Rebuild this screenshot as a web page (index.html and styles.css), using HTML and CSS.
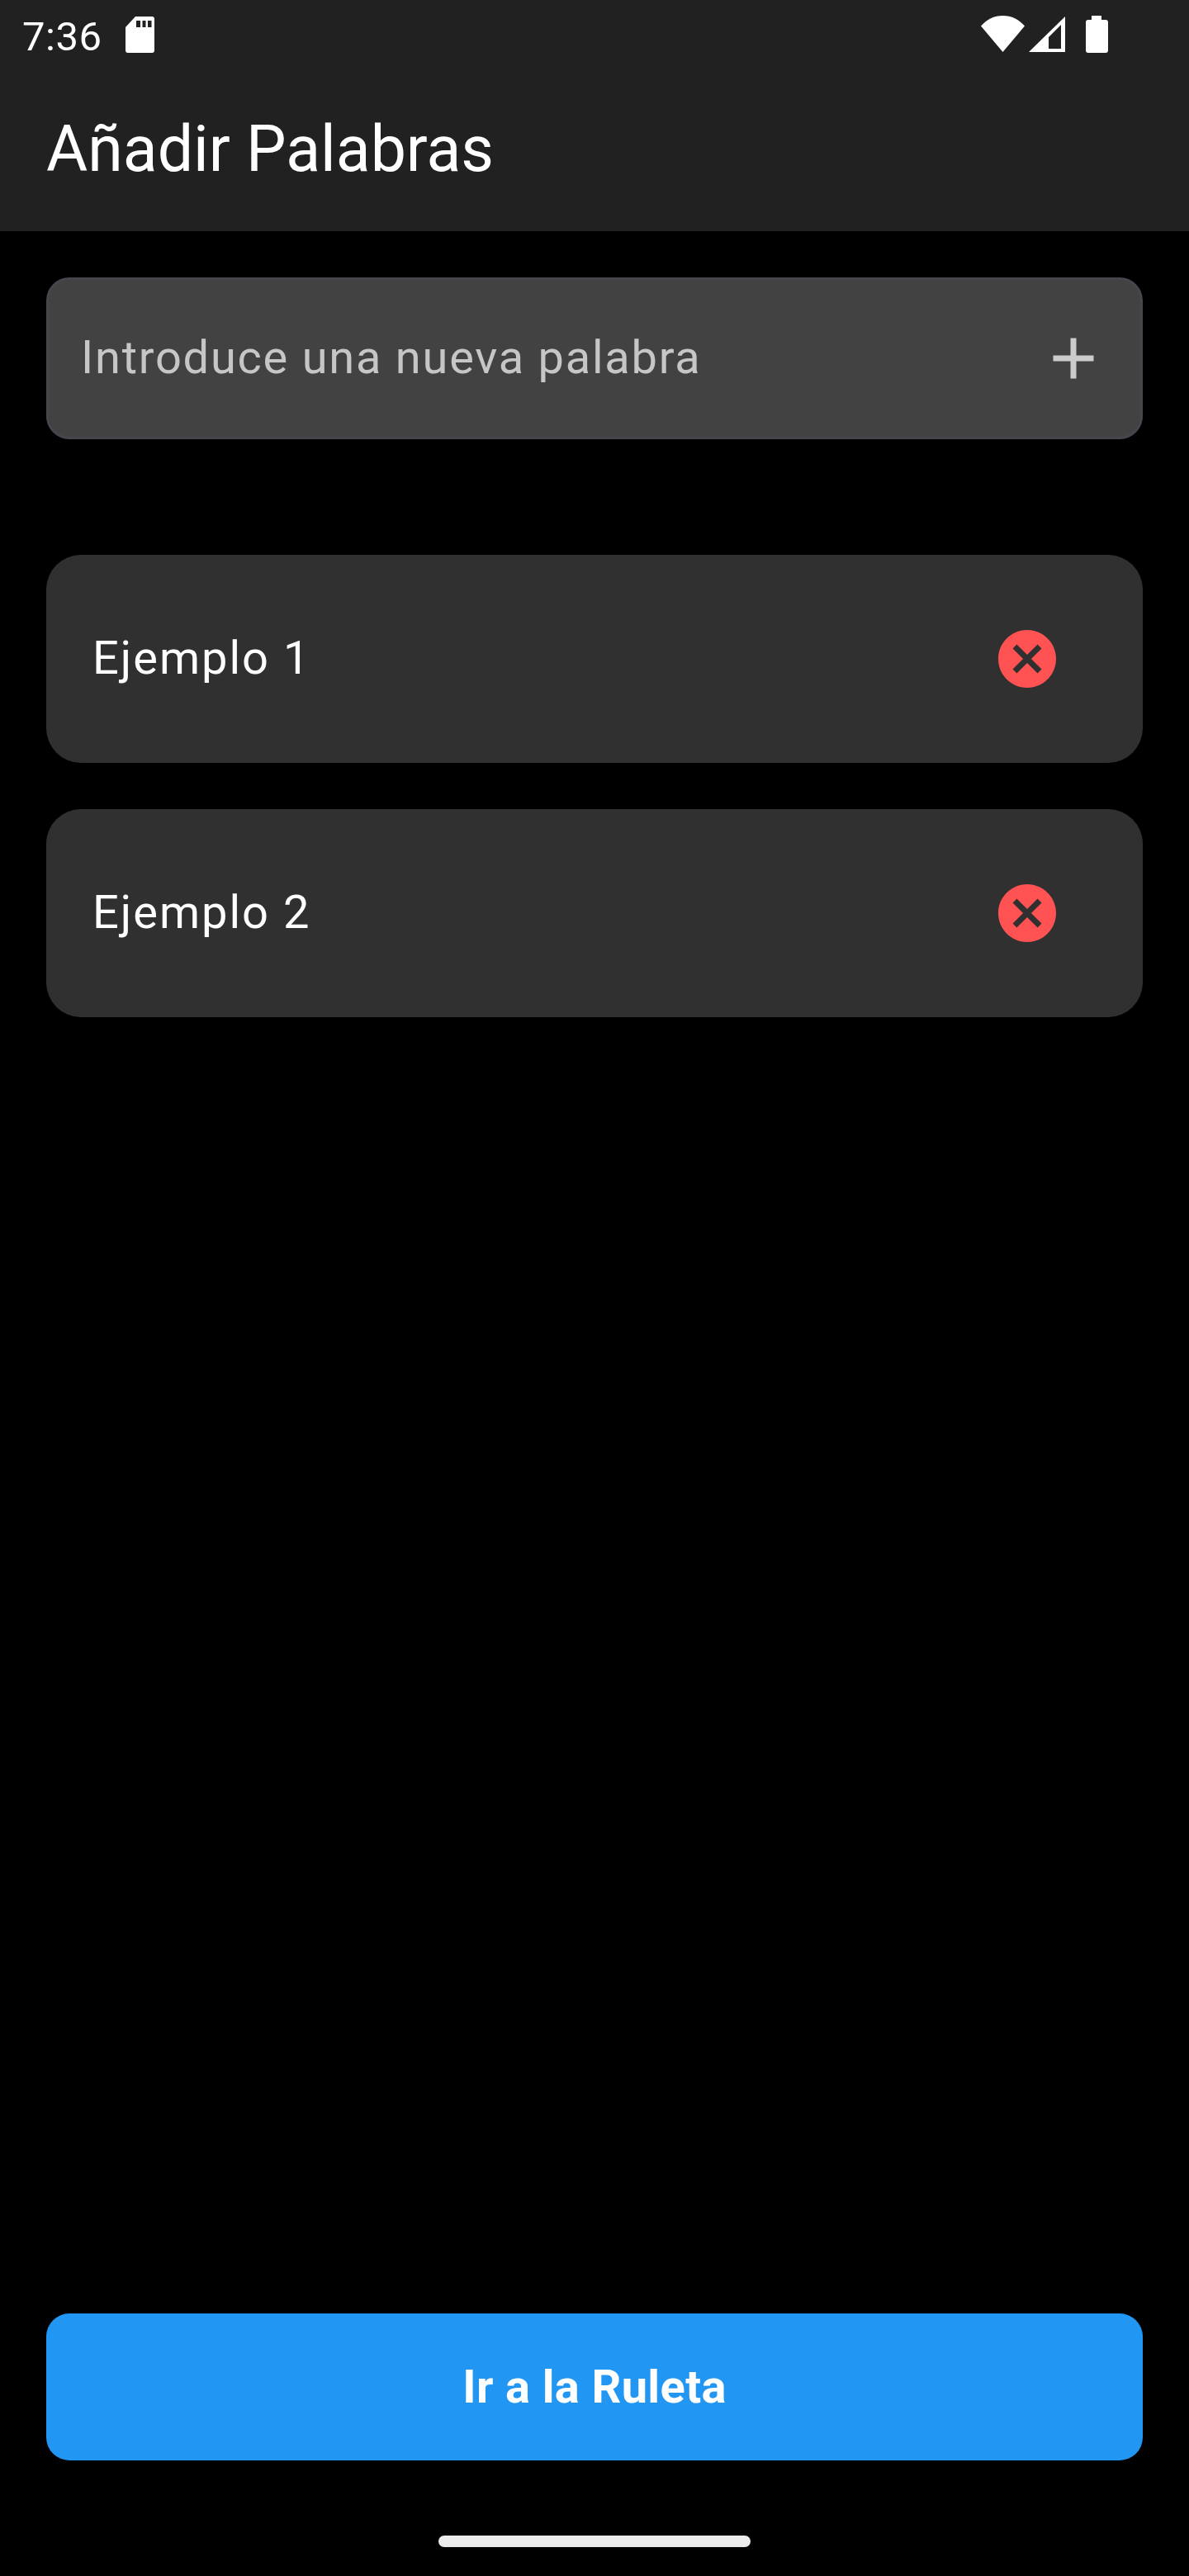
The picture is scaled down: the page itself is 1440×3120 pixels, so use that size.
FILE: index.html
```html
<!DOCTYPE html>
<html lang="es">
<head>
  <meta charset="UTF-8">
  <meta name="viewport" content="width=device-width, initial-scale=1">
  <title>Añadir Palabras</title>
  <link rel="stylesheet" href="styles.css">
</head>
<body>
  <header class="app-header">
    <div class="status-bar">
      <div class="status-left">
        <span class="status-time">7:36</span>
        <svg class="icon-sd" viewBox="0 0 35 44" aria-hidden="true">
          <path fill="#fff" fill-rule="evenodd" d="M12 0H32Q35 0 35 3V41Q35 44 32 44H3Q0 44 0 41V13ZM13 5V13H18V5ZM20.500 5V13H24.500V5ZM27 5V13H31.500V5Z"/>
        </svg>
      </div>
      <div class="status-right">
        <svg class="icon-wifi" viewBox="0 0 53 44" aria-hidden="true">
          <path fill="#fff" d="M0 12.500C7 4.500 16 0 26.500 0S46 4.500 53 12.500L26.500 44Z"/>
        </svg>
        <svg class="icon-signal" viewBox="0 0 44 43" aria-hidden="true">
          <path fill="#fff" fill-rule="evenodd" d="M44 0V43H0ZM39 10 24 25V39H39Z"/>
        </svg>
        <svg class="icon-battery" viewBox="0 0 27 45" aria-hidden="true">
          <path fill="#fff" d="M7 0H19V5H24Q27 5 27 8V42Q27 45 24 45H3Q0 45 0 42V8Q0 5 3 5H7Z"/>
        </svg>
      </div>
    </div>
    <h1 class="app-title">Añadir Palabras</h1>
  </header>

  <main class="content">
    <div class="word-input">
      <span class="word-placeholder">Introduce una nueva palabra</span>
      <svg class="icon-add" viewBox="0 0 24 24" aria-hidden="true">
        <path d="M19 13h-6v6h-2v-6H5v-2h6V5h2v6h6v2z"/>
      </svg>
    </div>

    <ul class="word-list">
      <li class="word-card">
        <span class="word-text">Ejemplo 1</span>
        <button class="btn-delete" aria-label="Eliminar">
          <svg viewBox="0 0 24 24" aria-hidden="true">
            <path d="M12 2C6.47 2 2 6.47 2 12s4.47 10 10 10 10-4.47 10-10S17.530 2 12 2zm5 13.59L15.590 17 12 13.410 8.410 17 7 15.590 10.590 12 7 8.410 8.410 7 12 10.590 15.590 7 17 8.410 13.410 12 17 15.590z"/>
          </svg>
        </button>
      </li>
      <li class="word-card">
        <span class="word-text">Ejemplo 2</span>
        <button class="btn-delete" aria-label="Eliminar">
          <svg viewBox="0 0 24 24" aria-hidden="true">
            <path d="M12 2C6.47 2 2 6.47 2 12s4.47 10 10 10 10-4.47 10-10S17.530 2 12 2zm5 13.59L15.590 17 12 13.410 8.410 17 7 15.590 10.590 12 7 8.410 8.410 7 12 10.590 15.590 7 17 8.410 13.410 12 17 15.590z"/>
          </svg>
        </button>
      </li>
    </ul>

    <a href="#" class="btn-roulette">Ir a la Ruleta</a>
  </main>

  <div class="nav-bar">
    <div class="nav-handle"></div>
  </div>
</body>
</html>
```

FILE: styles.css
```css
* {
  box-sizing: border-box;
}
body {
  font-family: Roboto, "Liberation Sans", sans-serif;
  background-color: #000;
  color: #fff;
  margin: 0;
  width: 1440px;
  height: 3120px;
  display: flex;
  flex-direction: column;
}
.app-header {
  height: 280px;
  background-color: #212121;
  flex-shrink: 0;
}
.status-bar {
  height: 139px;
  display: flex;
  justify-content: space-between;
  padding: 19px 98px 0 27px;
}
.status-left {
  display: flex;
  align-items: flex-start;
  gap: 28.5px;
}
.status-time {
  font-size: 49px;
  line-height: 51px;
  letter-spacing: 0.5px;
}
.icon-sd {
  width: 35px;
  height: 44px;
  margin-top: 1px;
}
.status-right {
  display: flex;
  align-items: flex-start;
}
.icon-wifi {
  width: 53px;
  height: 44px;
}
.icon-signal {
  width: 44px;
  height: 43px;
  margin: 1px 0 0 5px;
}
.icon-battery {
  width: 27px;
  height: 45px;
  margin-left: 25px;
}
.app-title {
  margin: 0;
  padding-left: 56px;
  font-size: 77px;
  font-weight: 400;
  line-height: 84px;
}
.content {
  flex: 1;
  display: flex;
  flex-direction: column;
  padding: 56px 56px 0;
}
.word-input {
  height: 196px;
  background-color: #424242;
  border: 3px solid #49454f;
  border-radius: 28px;
  display: flex;
  align-items: center;
  justify-content: space-between;
  padding: 0 39px;
  margin-bottom: 140px;
}
.word-placeholder {
  font-size: 56px;
  letter-spacing: 1.75px;
  color: #c6c6c6;
  margin-bottom: 2px;
}
.icon-add {
  width: 84px;
  height: 84px;
  fill: #ccc;
}
.word-list {
  list-style: none;
  margin: 0;
  padding: 0;
  display: flex;
  flex-direction: column;
  gap: 56px;
}
.word-card {
  height: 252px;
  background-color: #303030;
  border-radius: 42px;
  display: flex;
  align-items: center;
  justify-content: space-between;
  padding: 42px 56px;
}
.word-text {
  font-size: 56px;
  letter-spacing: 2px;
  margin-bottom: 2px;
}
.btn-delete {
  width: 168px;
  height: 168px;
  padding: 0;
  border: 0;
  background: none;
  display: flex;
  align-items: center;
  justify-content: center;
}
.btn-delete svg {
  width: 84px;
  height: 84px;
  fill: #ff5252;
}
.btn-roulette {
  margin-top: auto;
  height: 178px;
  background-color: #2196f3;
  border-radius: 28px;
  color: #fff;
  font-size: 56px;
  font-weight: 700;
  letter-spacing: 0.35px;
  text-decoration: none;
  display: flex;
  align-items: center;
  justify-content: center;
}
.nav-bar {
  height: 140px;
  flex-shrink: 0;
  display: flex;
  justify-content: center;
  padding-top: 91px;
}
.nav-handle {
  width: 378px;
  height: 14px;
  background-color: #ebebeb;
  border-radius: 7px;
}
```
